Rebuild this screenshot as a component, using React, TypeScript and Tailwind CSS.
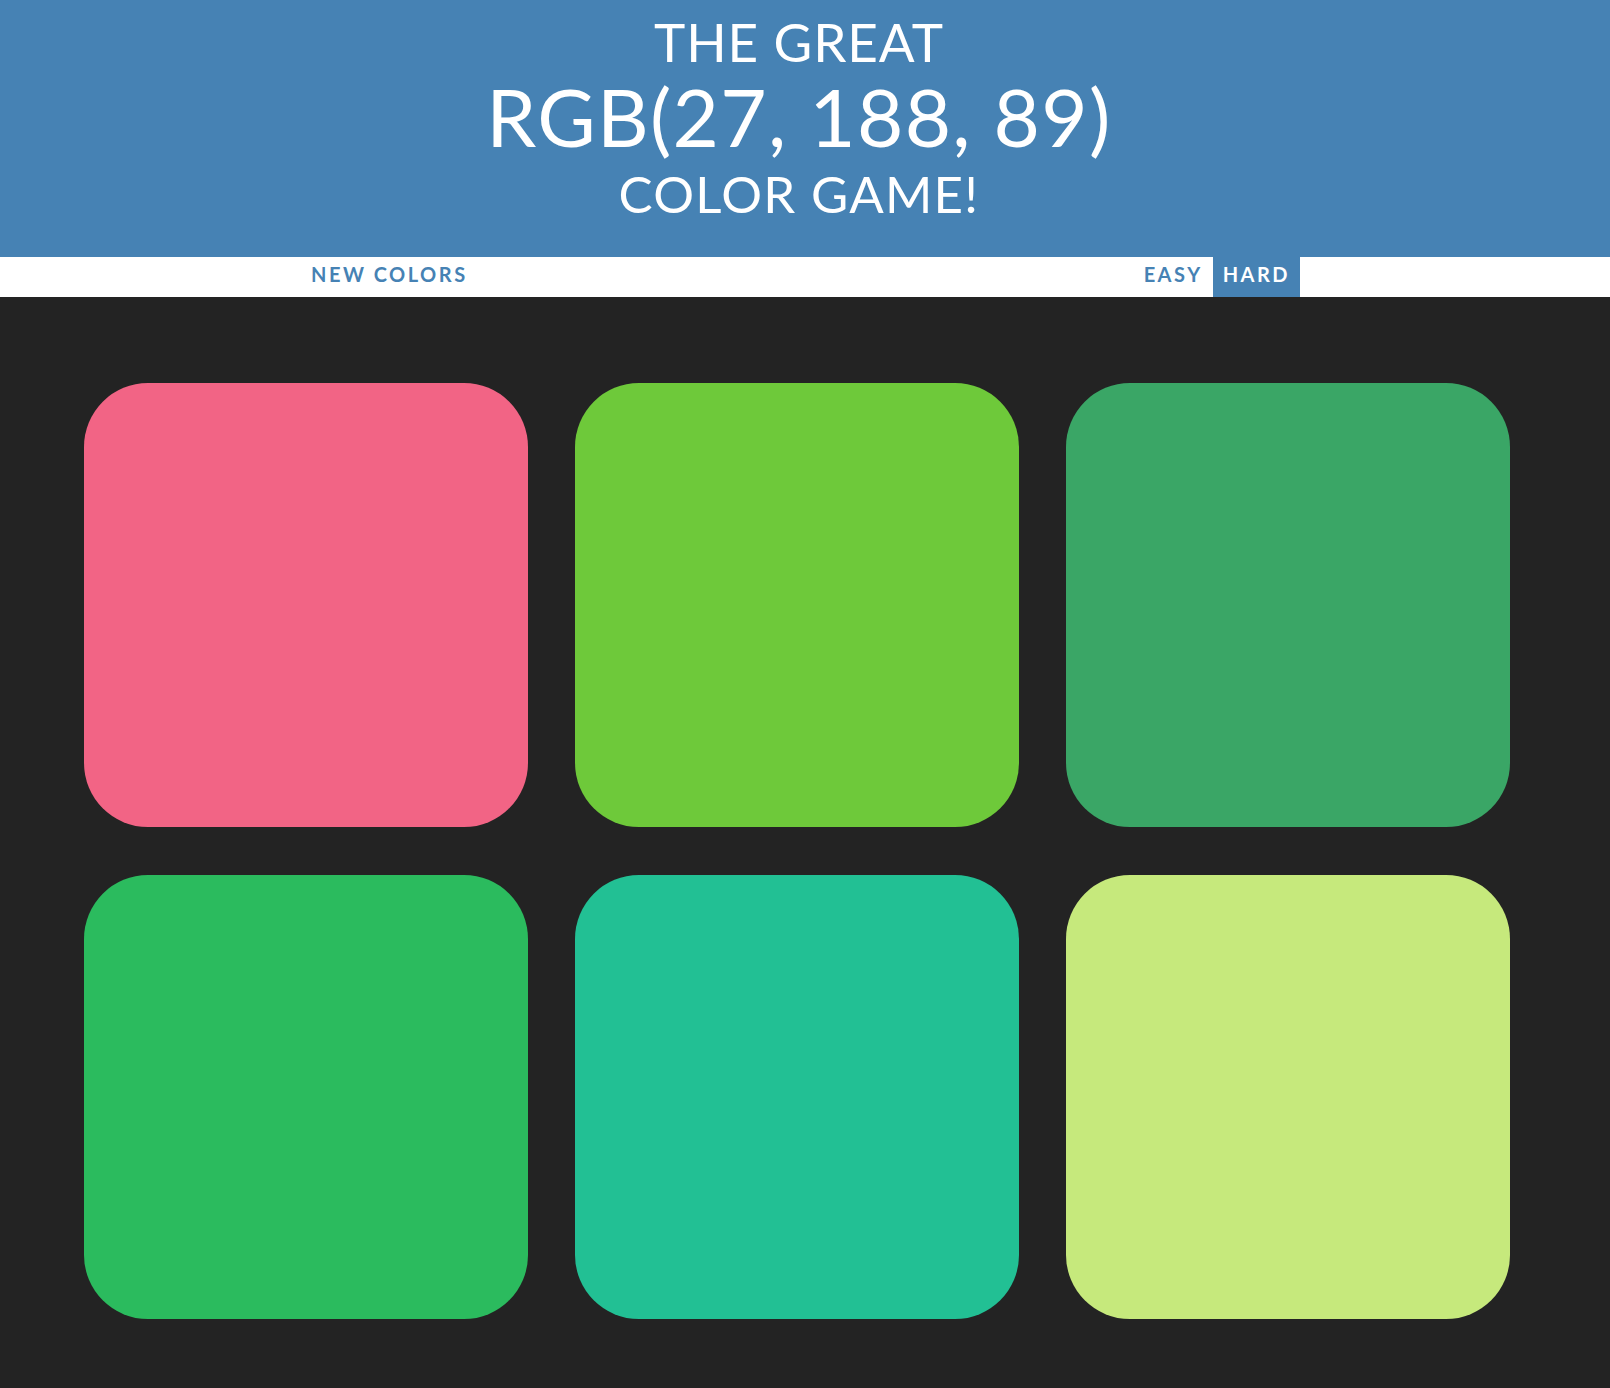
const squares = ["#f26485", "#6ec93a", "#3aa666", "#2bbb5e", "#22c094", "#c6e97c"];

export default function App() {
  return (
    <div className="min-h-[1388px] bg-[#232323] font-['Lato',sans-serif]">
      {/* Title */}
      <h1 className="bg-[#4682b4] pt-[12px] pb-[29px] pr-[12px] text-center font-normal uppercase text-white">
        <span className="block text-[53px] leading-[60px] tracking-[0.9px]">The Great</span>
        <span className="block text-[80px] leading-[88px] tracking-[1.3px]">RGB(27, 188, 89)</span>
        <span className="block text-[51px] leading-[67.5px] tracking-[1.3px]">Color Game!</span>
      </h1>

      {/* Stripe */}
      <div className="flex h-[40px] items-stretch bg-white pl-[301px] pr-[310px]">
        <button className="px-[10px] pb-[5px] text-[20px] font-bold uppercase tracking-[2.5px] text-[#4682b4]">
          New Colors
        </button>
        <span className="flex-1" />
        <button className="px-[10px] pb-[5px] text-[20px] font-bold uppercase tracking-[2.5px] text-[#4682b4]">
          Easy
        </button>
        <button className="bg-[#4682b4] px-[10px] pb-[5px] text-[20px] font-bold uppercase tracking-[2.5px] text-white">
          Hard
        </button>
      </div>

      {/* Squares */}
      <div className="grid grid-cols-[repeat(3,444px)] gap-x-[47px] gap-y-[48px] pl-[84px] pt-[86px]">
        {squares.map((c) => (
          <div key={c} className="h-[444px] rounded-[64px]" style={{ backgroundColor: c }} />
        ))}
      </div>
    </div>
  );
}
